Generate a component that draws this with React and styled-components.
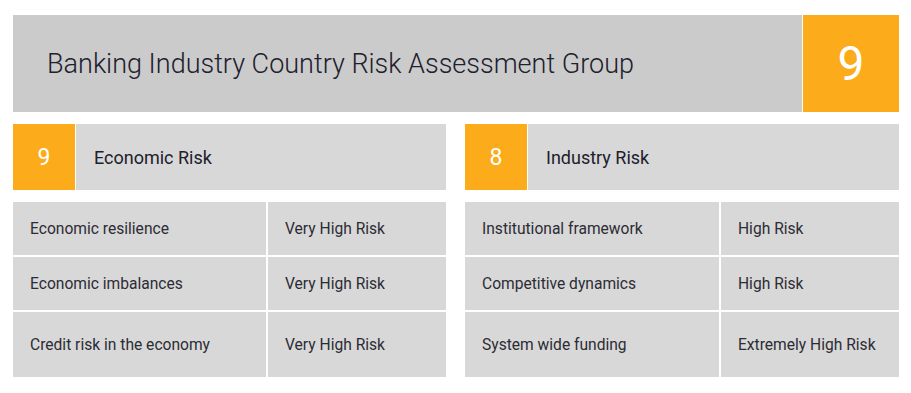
import React from 'react';
import styled, { createGlobalStyle } from 'styled-components';

const GlobalStyle = createGlobalStyle`
  html, body {
    margin: 0;
    padding: 0;
    background: #ffffff;
  }
  body {
    font-family: Roboto, "Liberation Sans", Arial, sans-serif;
    color: #20202c;
  }
`;

const ORANGE = '#fcab1b';

const Page = styled.div`
  padding: 15px 12px 16px 13px;
`;

const Header = styled.header`
  display: flex;
  height: 97px;
  gap: 1px;
`;

const Title = styled.div`
  flex: 1;
  display: flex;
  align-items: center;
  padding-left: 34px;
  background: #cbcbcb;
  font-size: 27px;
  font-weight: 300;
`;

const ScoreBox = styled.div`
  width: ${(p) => p.size}px;
  display: flex;
  align-items: center;
  justify-content: center;
  background: ${ORANGE};
  color: #ffffff;
  font-size: ${(p) => p.fontSize}px;
  font-weight: 400;
`;

const Columns = styled.div`
  display: grid;
  grid-template-columns: 433px 1fr;
  column-gap: 19px;
  margin-top: 12px;
`;

const Column = styled.section`
  display: flex;
  flex-direction: column;
  gap: 12px;
`;

const SectionHead = styled.div`
  display: flex;
  height: 66px;
  gap: 1px;
`;

const SectionName = styled.div`
  flex: 1;
  display: flex;
  align-items: center;
  padding-left: 18px;
  background: #d8d8d8;
  font-size: 18px;
`;

const Table = styled.div`
  display: grid;
  grid-template-columns: 1fr 178px;
  grid-template-rows: 53px 53px 65px;
  gap: 2px;
`;

const Cell = styled.div`
  display: flex;
  align-items: center;
  padding-left: 17px;
  background: #d8d8d8;
  font-size: 15.6px;
  color: #2c2c34;
`;

const groups = [
  {
    score: 9,
    name: 'Economic Risk',
    rows: [
      ['Economic resilience', 'Very High Risk'],
      ['Economic imbalances', 'Very High Risk'],
      ['Credit risk in the economy', 'Very High Risk'],
    ],
  },
  {
    score: 8,
    name: 'Industry Risk',
    rows: [
      ['Institutional framework', 'High Risk'],
      ['Competitive dynamics', 'High Risk'],
      ['System wide funding', 'Extremely High Risk'],
    ],
  },
];

export default function App() {
  return (
    <>
      <GlobalStyle />
      <Page>
        <Header>
          <Title>Banking Industry Country Risk Assessment Group</Title>
          <ScoreBox size={96} fontSize={48}>9</ScoreBox>
        </Header>
        <Columns>
          {groups.map((g) => (
            <Column key={g.name}>
              <SectionHead>
                <ScoreBox size={62} fontSize={23}>{g.score}</ScoreBox>
                <SectionName>{g.name}</SectionName>
              </SectionHead>
              <Table>
                {g.rows.map(([label, value]) => (
                  <React.Fragment key={label}>
                    <Cell>{label}</Cell>
                    <Cell>{value}</Cell>
                  </React.Fragment>
                ))}
              </Table>
            </Column>
          ))}
        </Columns>
      </Page>
    </>
  );
}
